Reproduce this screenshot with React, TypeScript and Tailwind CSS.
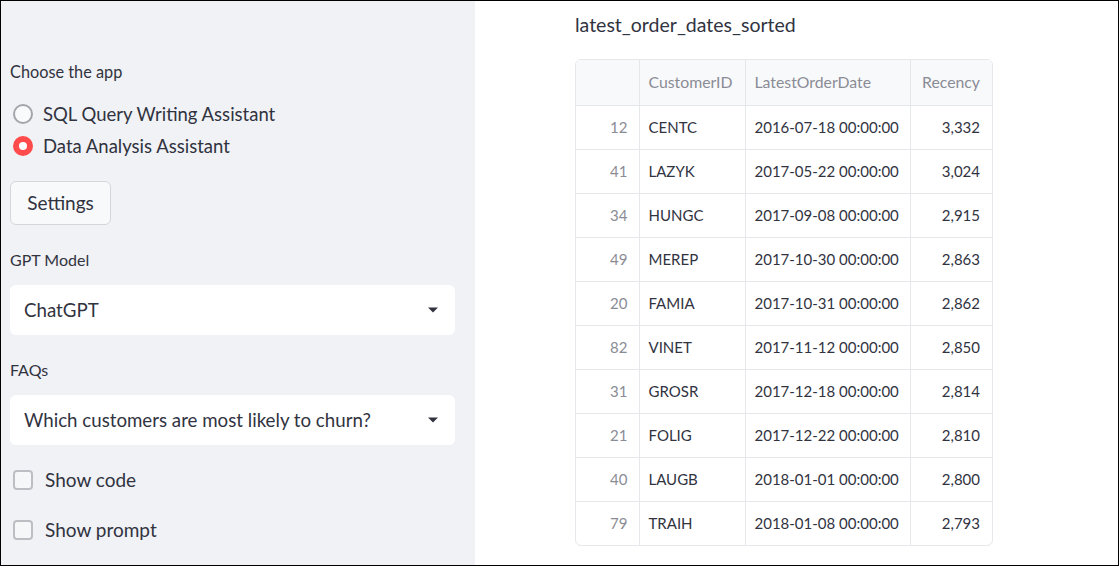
const rows = [
  ["12", "CENTC", "2016-07-18 00:00:00", "3,332"],
  ["41", "LAZYK", "2017-05-22 00:00:00", "3,024"],
  ["34", "HUNGC", "2017-09-08 00:00:00", "2,915"],
  ["49", "MEREP", "2017-10-30 00:00:00", "2,863"],
  ["20", "FAMIA", "2017-10-31 00:00:00", "2,862"],
  ["82", "VINET", "2017-11-12 00:00:00", "2,850"],
  ["31", "GROSR", "2017-12-18 00:00:00", "2,814"],
  ["21", "FOLIG", "2017-12-22 00:00:00", "2,810"],
  ["40", "LAUGB", "2018-01-01 00:00:00", "2,800"],
  ["79", "TRAIH", "2018-01-08 00:00:00", "2,793"],
];

function Caret() {
  return (
    <svg width="12" height="8" viewBox="0 0 12 8" className="fill-[#31333f]">
      <path d="M1 1.5h10L6 6.5z" />
    </svg>
  );
}

function Select({ value }: { value: string }) {
  return (
    <div className="flex h-[50px] w-[445px] items-center justify-between rounded-md bg-white pl-[14px] pr-[16px] text-[18.7px]">
      <span>{value}</span>
      <Caret />
    </div>
  );
}

function Checkbox({ label }: { label: string }) {
  return (
    <div className="flex items-center gap-3 pl-[3px]">
      <span className="h-[20px] w-[20px] rounded-[4px] border-2 border-[#bdbec3] bg-white/40" />
      <span className="text-[19px] leading-[24px]">{label}</span>
    </div>
  );
}

function Sidebar() {
  return (
    <aside className="flex w-[474px] shrink-0 flex-col bg-[#f0f2f6] pl-[9px] pt-[59px] text-[#31333f]">
      <p className="text-[16.3px] leading-[24px]">Choose the app</p>
      <div className="mt-[20px] flex flex-col gap-[12px] pl-[3px]">
        <div className="flex items-center gap-[10px]">
          <span className="h-[20px] w-[20px] rounded-full border-2 border-[#a3a5ab] bg-white/60" />
          <span className="text-[18.5px] leading-[20px]">SQL Query Writing Assistant</span>
        </div>
        <div className="flex items-center gap-[10px]">
          <span className="flex h-[20px] w-[20px] items-center justify-center rounded-full bg-[#ff4b4b]">
            <span className="h-[8px] w-[8px] rounded-full bg-white" />
          </span>
          <span className="text-[18.5px] leading-[20px]">Data Analysis Assistant</span>
        </div>
      </div>
      <button className="mt-[25px] h-[44px] w-[101px] rounded-md border border-[#d5d6da] bg-[#f8f9fb] text-[19px]">
        Settings
      </button>
      <p className="mt-[23px] text-[16px] leading-[24px]">GPT Model</p>
      <div className="mt-[13px]">
        <Select value="ChatGPT" />
      </div>
      <p className="mt-[23px] text-[16px] leading-[24px]">FAQs</p>
      <div className="mt-[13px]">
        <Select value="Which customers are most likely to churn?" />
      </div>
      <div className="mt-[23px] flex flex-col gap-[26px]">
        <Checkbox label="Show code" />
        <Checkbox label="Show prompt" />
      </div>
    </aside>
  );
}

function Table() {
  const line = "border-[#e6e7ea]";
  return (
    <div className={`mt-[20px] w-[418px] overflow-hidden rounded-md border ${line} text-[15px]`}>
      <table className="w-full border-collapse">
        <thead>
          <tr className="h-[45px] bg-[#f8f9fb] text-[15.8px] text-[#8a8c95]">
            <th className={`w-[63px] border-b border-r ${line}`} />
            <th className={`w-[106px] border-b border-r ${line} pl-[9px] text-left font-normal`}>CustomerID</th>
            <th className={`w-[165px] border-b border-r ${line} pl-[9px] text-left font-normal`}>LatestOrderDate</th>
            <th className={`border-b ${line} pr-[12px] text-right font-normal`}>Recency</th>
          </tr>
        </thead>
        <tbody>
          {rows.map((r, i) => {
            const b = i < rows.length - 1 ? "border-b" : "";
            return (
              <tr key={r[0]} className="h-[44px] text-[#31333f]">
                <td className={`border-r ${line} ${b} pr-[11px] text-right text-[#8a8c95]`}>{r[0]}</td>
                <td className={`border-r ${line} ${b} pl-[9px]`}>{r[1]}</td>
                <td className={`border-r ${line} ${b} pl-[9px]`}>{r[2]}</td>
                <td className={`${line} ${b} pr-[12px] text-right`}>{r[3]}</td>
              </tr>
            );
          })}
        </tbody>
      </table>
    </div>
  );
}

export default function App() {
  return (
    <div
      className="flex h-[566px] w-[1119px] overflow-hidden border border-black bg-white text-[#31333f]"
      style={{ fontFamily: '"Lato", "Noto Sans", sans-serif' }}
    >
      <Sidebar />
      <main className="flex-1 pl-[100px] pt-[10px]">
        <p className="text-[19.5px] leading-[28px]">latest_order_dates_sorted</p>
        <Table />
      </main>
    </div>
  );
}
